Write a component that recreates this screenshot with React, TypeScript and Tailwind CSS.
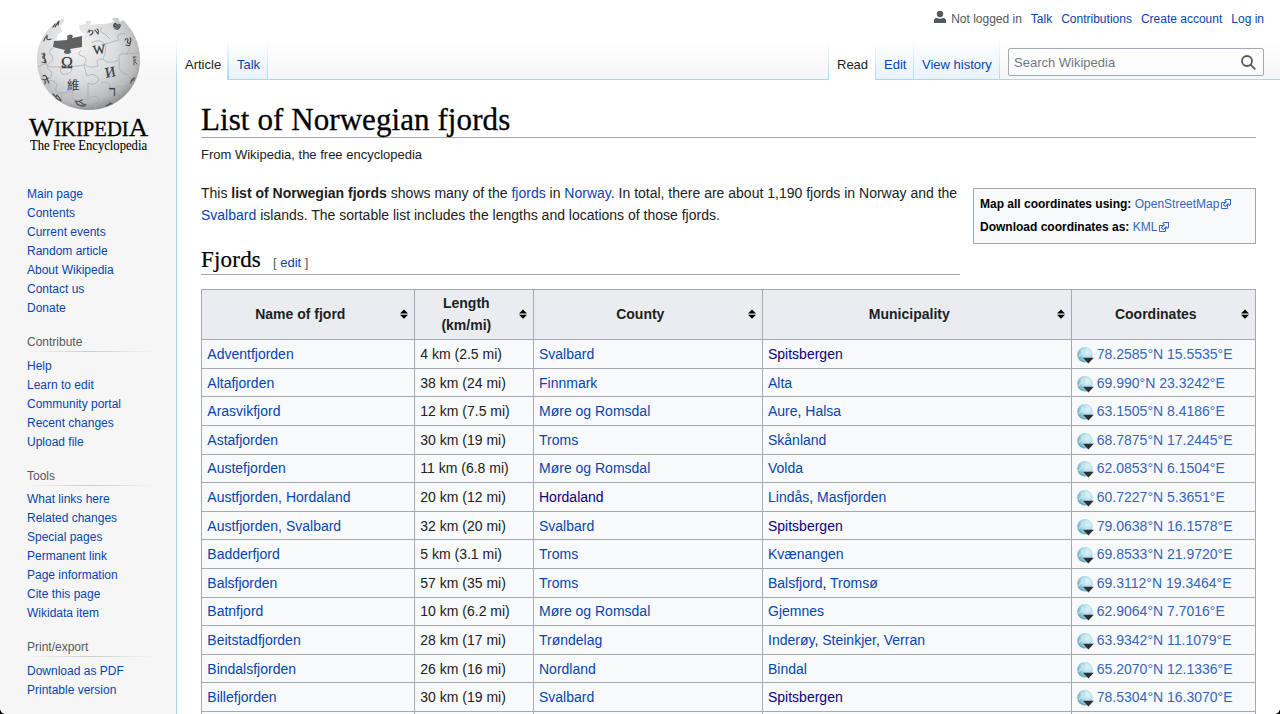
import React from "react";

type NavGroup = { title?: string; items: string[] };

const nav: NavGroup[] = [
  { items: ["Main page", "Contents", "Current events", "Random article", "About Wikipedia", "Contact us", "Donate"] },
  { title: "Contribute", items: ["Help", "Learn to edit", "Community portal", "Recent changes", "Upload file"] },
  {
    title: "Tools",
    items: ["What links here", "Related changes", "Special pages", "Permanent link", "Page information", "Cite this page", "Wikidata item"],
  },
  { title: "Print/export", items: ["Download as PDF", "Printable version"] },
];

// A leading "*" marks a link that has been visited.
const fjords: [string, string, string, string[], string][] = [
  ["Adventfjorden", "4 km (2.5 mi)", "Svalbard", ["*Spitsbergen"], "78.2585°N 15.5535°E"],
  ["Altafjorden", "38 km (24 mi)", "Finnmark", ["Alta"], "69.990°N 23.3242°E"],
  ["Arasvikfjord", "12 km (7.5 mi)", "Møre og Romsdal", ["Aure", "Halsa"], "63.1505°N 8.4186°E"],
  ["Astafjorden", "30 km (19 mi)", "Troms", ["Skånland"], "68.7875°N 17.2445°E"],
  ["Austefjorden", "11 km (6.8 mi)", "Møre og Romsdal", ["Volda"], "62.0853°N 6.1504°E"],
  ["Austfjorden, Hordaland", "20 km (12 mi)", "*Hordaland", ["Lindås", "Masfjorden"], "60.7227°N 5.3651°E"],
  ["Austfjorden, Svalbard", "32 km (20 mi)", "Svalbard", ["*Spitsbergen"], "79.0638°N 16.1578°E"],
  ["Badderfjord", "5 km (3.1 mi)", "Troms", ["Kvænangen"], "69.8533°N 21.9720°E"],
  ["Balsfjorden", "57 km (35 mi)", "Troms", ["Balsfjord", "Tromsø"], "69.3112°N 19.3464°E"],
  ["Batnfjord", "10 km (6.2 mi)", "Møre og Romsdal", ["Gjemnes"], "62.9064°N 7.7016°E"],
  ["Beitstadfjorden", "28 km (17 mi)", "Trøndelag", ["Inderøy", "Steinkjer", "Verran"], "63.9342°N 11.1079°E"],
  ["Bindalsfjorden", "26 km (16 mi)", "Nordland", ["Bindal"], "65.2070°N 12.1336°E"],
  ["Billefjorden", "30 km (19 mi)", "Svalbard", ["*Spitsbergen"], "78.5304°N 16.3070°E"],
  ["", "", "", [], ""],
];

function A({ children }: { children: string }) {
  const visited = children.startsWith("*");
  return (
    <a href="#" className={visited ? "text-[#0b0080]" : "text-[#0645ad]"}>
      {visited ? children.slice(1) : children}
    </a>
  );
}

function Logo() {
  return (
    <svg width="160" height="160" viewBox="0 0 160 160" className="block">
      <defs>
        <radialGradient id="globe" cx="0.4" cy="0.32" r="0.72">
          <stop offset="0" stopColor="#f2f2f2" />
          <stop offset="0.5" stopColor="#dcdddf" />
          <stop offset="0.82" stopColor="#b9bbbd" />
          <stop offset="1" stopColor="#85878a" />
        </radialGradient>
      </defs>
      <path
        d="M64 18 C47 26 37 41 37 60 C37 88 60 110 89 110 C117 110 140 88 140 60 C140 43 134 31 123 20 L120 22 L118 18 L112 18 L114 22 C108 24 103 24 98 24 L90 25 L91 21 L86 21 L86 24 L79 25 L80 31 L85 34 L81 36 L56 42 L58 34 L62 32 L60 26 L64 22 Z"
        fill="url(#globe)"
      />
      <path d="M54 41 L67 40 Q68 38 67 36 Q71 33 73 36 L72 38 L82 36 L82 47 L70 49 Q73 54 67 54 Q62 53 65 50 L53 47 Z" fill="#606163" />
      <g fill="none" stroke="#a6a8ab" strokeWidth="0.7">
        <path d="M53 48 Q48 50 50 54 Q55 57 51 62 Q46 64 48 69 Q54 72 50 78 Q44 80 50 87" />
        <path d="M81 50 Q76 55 82 56 Q89 58 84 64 Q90 69 98 66 Q95 58 103 59 Q107 65 119 60 Q118 52 126 54 L139 53" />
        <path d="M38 67 Q46 61 49 67 L61 67 Q59 76 67 74 Q74 72 71 67 L84 65 L87 76 Q95 72 99 79 Q96 87 88 83 L88 99 Q93 94 99 98 L95 109" />
        <path d="M45 83 Q53 77 57 85 Q53 93 61 93 L73 92 Q70 98 76 101 L88 99 M61 93 L63 104" />
        <path d="M103 59 Q107 50 105 44 Q99 38 91 43 M105 44 L119 40 Q115 32 125 34 M120 60 Q117 69 123 73 Q133 75 130 85 L111 88 Q108 80 101 83" />
        <path d="M102 27 Q98 32 105 34 L110 39 M126 54 Q133 48 128 41 L134 36 M111 88 Q106 98 115 101" />
      </g>
      <g fontFamily="Liberation Serif, serif" fill="#37393b" stroke="#37393b" strokeWidth="0.25">
        <text x="61" y="68" fontSize="16">Ω</text>
        <text x="93" y="54" fontSize="13" transform="rotate(-7 98 50)">W</text>
        <text x="105" y="77" fontSize="14.5" transform="rotate(-10 110 72)">И</text>
        <text x="67" y="90" fontSize="12.5" fontFamily="Noto Sans CJK TC, sans-serif" stroke="none">維</text>
        <text x="109" y="96" fontSize="14">ר</text>
      </g>
      <g fill="none" stroke="#4b4d50" strokeWidth="1.2" strokeLinecap="round">
        <path d="M89 30 l0.5 2 M88 32 q5 -3 5 0 q-1 3 -3 3 M95 30 l3 4 M97 29 q2 1 1 5" />
        <path d="M44 41 q1 -5 3 -4 q-1 4 4 2 M47 37 v-2 M53 27 l2 -3 M55 27 l3 -5 M58 25 l1 -4" />
        <path d="M42 54 q3 -1 3 1 q-3 1 -2 3 q3 1 3 4 M42 62 l4 1 M44 53 l1 9" />
        <path d="M43 76 q3 -2 4 3 l2 4 M42 79 q4 0 3 5 M45 80 l3 -2" />
        <path d="M53 94 l3 3 l1 -2 l4 5 M56 98 l5 3" />
        <path d="M75 101 q5 0 8 3 l3 1 M76 102 q1 4 9 4 M80 101 l2 -1" />
        <path d="M125 40 q2 -3 3 0 q-2 4 2 3 q2 -3 0 -5 M126 45 q5 2 4 -3" />
        <path d="M133 57 l3 0 M134 57 v8 M136 59 q-3 2 1 5" strokeWidth="0.9" />
        <path d="M131 83 q0 -4 3 -3 M132 80 q1 -2 3 -2 M106 106 l4 -2 M110 103 l2 1" />
      </g>
      <path d="M113 25 q2 -4 4 -1 q4 -1 4 2 q-1 3 -4 4 q-4 -1 -4 -5 Z" fill="#4b4d50" />
      <path d="M115 24.5 l4 4 M117 23.5 l3 3 M114 27 l3 2" stroke="#c7c8ca" strokeWidth="0.6" />
      <g fontFamily="Liberation Serif, serif" fill="#000" stroke="#000" strokeWidth="0.3">
        <text x="29" y="136" textLength="119" lengthAdjust="spacingAndGlyphs" fontSize="20">
          <tspan fontSize="26">W</tspan>IKIPEDI<tspan fontSize="26">A</tspan>
        </text>
        <text y="150" fontSize="14" x="30" textLength="117" lengthAdjust="spacingAndGlyphs" strokeWidth="0.1">The Free Encyclopedia</text>
      </g>
    </svg>
  );
}

function SortIcon() {
  return (
    <svg width="8" height="10" viewBox="0 0 8 10" className="shrink-0">
      <path d="M0 4.5 L4 0.5 L8 4.5 Z M0 5.7 H8 L4 9.7 Z" fill="#000" />
    </svg>
  );
}

function GlobePin() {
  return (
    <svg width="18" height="17" viewBox="0 0 18 17" className="mr-[2px] mt-[3px] shrink-0">
      <defs>
        <radialGradient id="pin" cx="0.65" cy="0.35" r="0.72">
          <stop offset="0" stopColor="#dff3f7" />
          <stop offset="0.5" stopColor="#b0dde9" />
          <stop offset="1" stopColor="#5c9fb9" />
        </radialGradient>
      </defs>
      <circle cx="8" cy="7.8" r="7.7" fill="url(#pin)" />
      <path d="M4 3 Q7 4 4.5 7 Q2 8 2 10 M9 2 Q14 4 13 8" stroke="#d7f1f4" strokeOpacity="0.6" strokeWidth="1.5" fill="none" />
      <path d="M6 10.8 H16.8 L11.4 16.5 Z" fill="#2a3033" />
    </svg>
  );
}

function External() {
  return (
    <svg width="12" height="12" viewBox="0 0 12 12" className="ml-px inline-block align-[-2px]" fill="#fff" stroke="#3366cc">
      <path d="M1.5 4.518h5.982v5.982H1.5z" />
      <path d="M5.765 1H11v5.39L9.427 7.937l-1.31-1.31L5.393 9.35l-2.69-2.688 2.81-2.808L4.2 2.544z" fill="#3366cc" stroke="none" />
      <path d="m9.995 2.004.022 4.885L8.2 5.07 5.32 7.95 4.09 6.723l2.882-2.88-1.85-1.852z" stroke="none" />
    </svg>
  );
}

const tab = "flex h-10 items-end border-r pl-2 [border-image:linear-gradient(to_bottom,#fff,#a7d7f9)_1] leading-4 whitespace-nowrap";
const activeTab = "bg-white pb-[7px]";
const idleTab = "border-b bg-gradient-to-b from-white to-[#e8f2f8] pb-[6px] text-[#0645ad]";

export default function App() {
  return (
    <div className="bg-black">
      <div className="flex h-[714px] w-[1280px] overflow-hidden rounded-b-[6px] bg-[#f6f6f6] font-['Liberation_Sans',Arial,sans-serif] text-sm text-[#202122]">
        <aside className="w-[176px] shrink-0 bg-[linear-gradient(to_bottom,#fff_40px,#f6f6f6_80px)]">
          <Logo />
          <nav className="pl-[27px] pt-[25px] text-xs leading-[19px]">
            {nav.map((group, i) => (
              <section key={i} className={i ? "pt-[15px]" : ""}>
                {group.title && (
                  <>
                    <h3 className="text-[#54595d]">{group.title}</h3>
                    <div className="-mt-px mb-[4.6px] h-px w-[128px] bg-gradient-to-r from-transparent via-[#c8ccd1] to-transparent" />
                  </>
                )}
                <ul>
                  {group.items.map((item) => (
                    <li key={item}>
                      <A>{item}</A>
                    </li>
                  ))}
                </ul>
              </section>
            ))}
          </nav>
        </aside>
        <div className="flex min-w-0 grow flex-col">
          <header className="h-20 shrink-0 bg-[linear-gradient(to_bottom,#fff_40px,#f6f6f6_80px)]">
            <div className="flex h-10 items-start justify-end gap-[9px] pr-4 pt-3 text-xs leading-[14px]">
              <span className="flex text-[#54595d]">
                <svg width="12" height="14" viewBox="0 0 12 14" className="-mt-0.5 mr-[5px]" fill="#54595d">
                  <circle cx="6" cy="4" r="3.2" />
                  <path d="M0 13 V10.5 Q0 8 2.5 8 H3 Q6 9.5 9 8 H9.5 Q12 8 12 10.5 V13 Z" />
                </svg>
                Not logged in
              </span>
              <A>Talk</A>
              <A>Contributions</A>
              <A>Create account</A>
              <A>Log in</A>
            </div>
            <div className="flex h-10 text-[13px]">
              <div className="w-px bg-gradient-to-b from-white to-[#a7d7f9]" />
              <div className={`${tab} ${activeTab} w-[51px]`}>Article</div>
              <div className={`${tab} ${idleTab} w-[40px] border-l`}>Talk</div>
              <div className="grow border-b border-[#a7d7f9]" />
              <div className={`${tab} ${activeTab} w-[48px] border-l`}>Read</div>
              <div className={`${tab} ${idleTab} w-[38px]`}>Edit</div>
              <div className={`${tab} ${idleTab} w-[86px]`}>View history</div>
              <div className="w-[280px] shrink-0 border-b border-[#a7d7f9] pl-2 pr-4 pt-2">
                <div className="flex h-7 items-center justify-between rounded-[2px] border border-[#a2a9b1] bg-white/50 pl-[5px] pr-[7px] text-[#72777d]">
                  <span className="pt-[2px]">Search Wikipedia</span>
                  <svg width="15" height="15" viewBox="0 0 15 15" fill="none" stroke="#54595d" strokeWidth="1.8">
                    <circle cx="6" cy="6" r="5" />
                    <path d="M9.6 9.6 L14.3 14.3" />
                  </svg>
                </div>
              </div>
            </div>
          </header>
          <main className="grow border-l border-[#a7d7f9] bg-white px-6">
            <h1 className="h-[58px] border-b border-[#a2a9b1] pt-[22px] font-['Liberation_Serif',serif] text-[31px] leading-[36px] tracking-[0.08px] text-black [-webkit-text-stroke:0.3px_black]">
              List of Norwegian fjords
            </h1>
            <p className="pt-[9px] text-[13px] leading-4">From Wikipedia, the free encyclopedia</p>
            <div className="flex justify-between pt-[19px]">
              <div className="w-[759px]">
                <p className="leading-[22px]">
                  This <b>list of Norwegian fjords</b> shows many of the <A>fjords</A> in <A>Norway</A>. In total, there are about 1,190 fjords in
                  Norway and the
                  <br />
                  <A>Svalbard</A> islands. The sortable list includes the lengths and locations of those fjords.
                </p>
                <h2 className="mt-[14px] flex h-[35px] items-baseline border-b border-[#a2a9b1] pt-[6px] font-['Liberation_Serif',serif] text-[23px] leading-[28px] tracking-[0.2px] text-black">
                  <span className="[-webkit-text-stroke:0.2px_black]">Fjords</span>
                  <span className="ml-[12px] font-['Liberation_Sans',sans-serif] text-[13px] tracking-normal text-[#54595d]">
                    [ <A>edit</A> ]
                  </span>
                </h2>
              </div>
              <div className="mt-[6px] h-[56px] w-[283px] border border-[#a2a9b1] bg-[#f8f9fa] pl-[6px] pt-1 text-xs leading-[23px] text-[#3366bb]">
                <div className="h-[23px]">
                  <b className="text-black">Map all coordinates using:</b> OpenStreetMap
                  <External />
                </div>
                <div className="h-[23px]">
                  <b className="text-black">Download coordinates as:</b> KML
                  <External />
                </div>
              </div>
            </div>
            <table className="mt-[14px] w-[1055px] table-fixed border-collapse bg-[#f8f9fa]">
              <colgroup>
                <col className="w-[213px]" />
                <col className="w-[119px]" />
                <col className="w-[229px]" />
                <col className="w-[309px]" />
                <col className="w-[184px]" />
              </colgroup>
              <thead>
                <tr className="h-[50.3px] bg-[#eaecf0]">
                  {["Name of fjord", "Length (km/mi)", "County", "Municipality", "Coordinates"].map((h) => (
                    <th key={h} className="border border-[#a2a9b1] p-0">
                      <div className="flex items-center pb-[1.5px] pl-[5px] pr-[6.4px] leading-[22px]">
                        <span className="grow pl-3.5 pr-5">{h}</span>
                        <SortIcon />
                      </div>
                    </th>
                  ))}
                </tr>
              </thead>
              <tbody>
                {fjords.map(([name, length, county, places, coords], i) => (
                  <tr key={i} className="h-[28.6px] leading-[22px]">
                    <td className="border border-[#a2a9b1] px-[5.3px] py-0">
                      <A>{name}</A>
                    </td>
                    <td className="border border-[#a2a9b1] px-[5.3px] py-0">{length}</td>
                    <td className="border border-[#a2a9b1] px-[5px] py-0">
                      <A>{county}</A>
                    </td>
                    <td className="border border-[#a2a9b1] px-[5px] py-0">
                      {places.map((p, j) => (
                        <React.Fragment key={p}>
                          {j > 0 && ", "}
                          <A>{p}</A>
                        </React.Fragment>
                      ))}
                    </td>
                    <td className="border border-[#a2a9b1] px-[4.8px] py-0 text-[#3366bb]">
                      {coords && (
                        <div className="flex h-[22px] items-center whitespace-nowrap">
                          <GlobePin />
                          {coords}
                        </div>
                      )}
                    </td>
                  </tr>
                ))}
              </tbody>
            </table>
          </main>
        </div>
      </div>
    </div>
  );
}
